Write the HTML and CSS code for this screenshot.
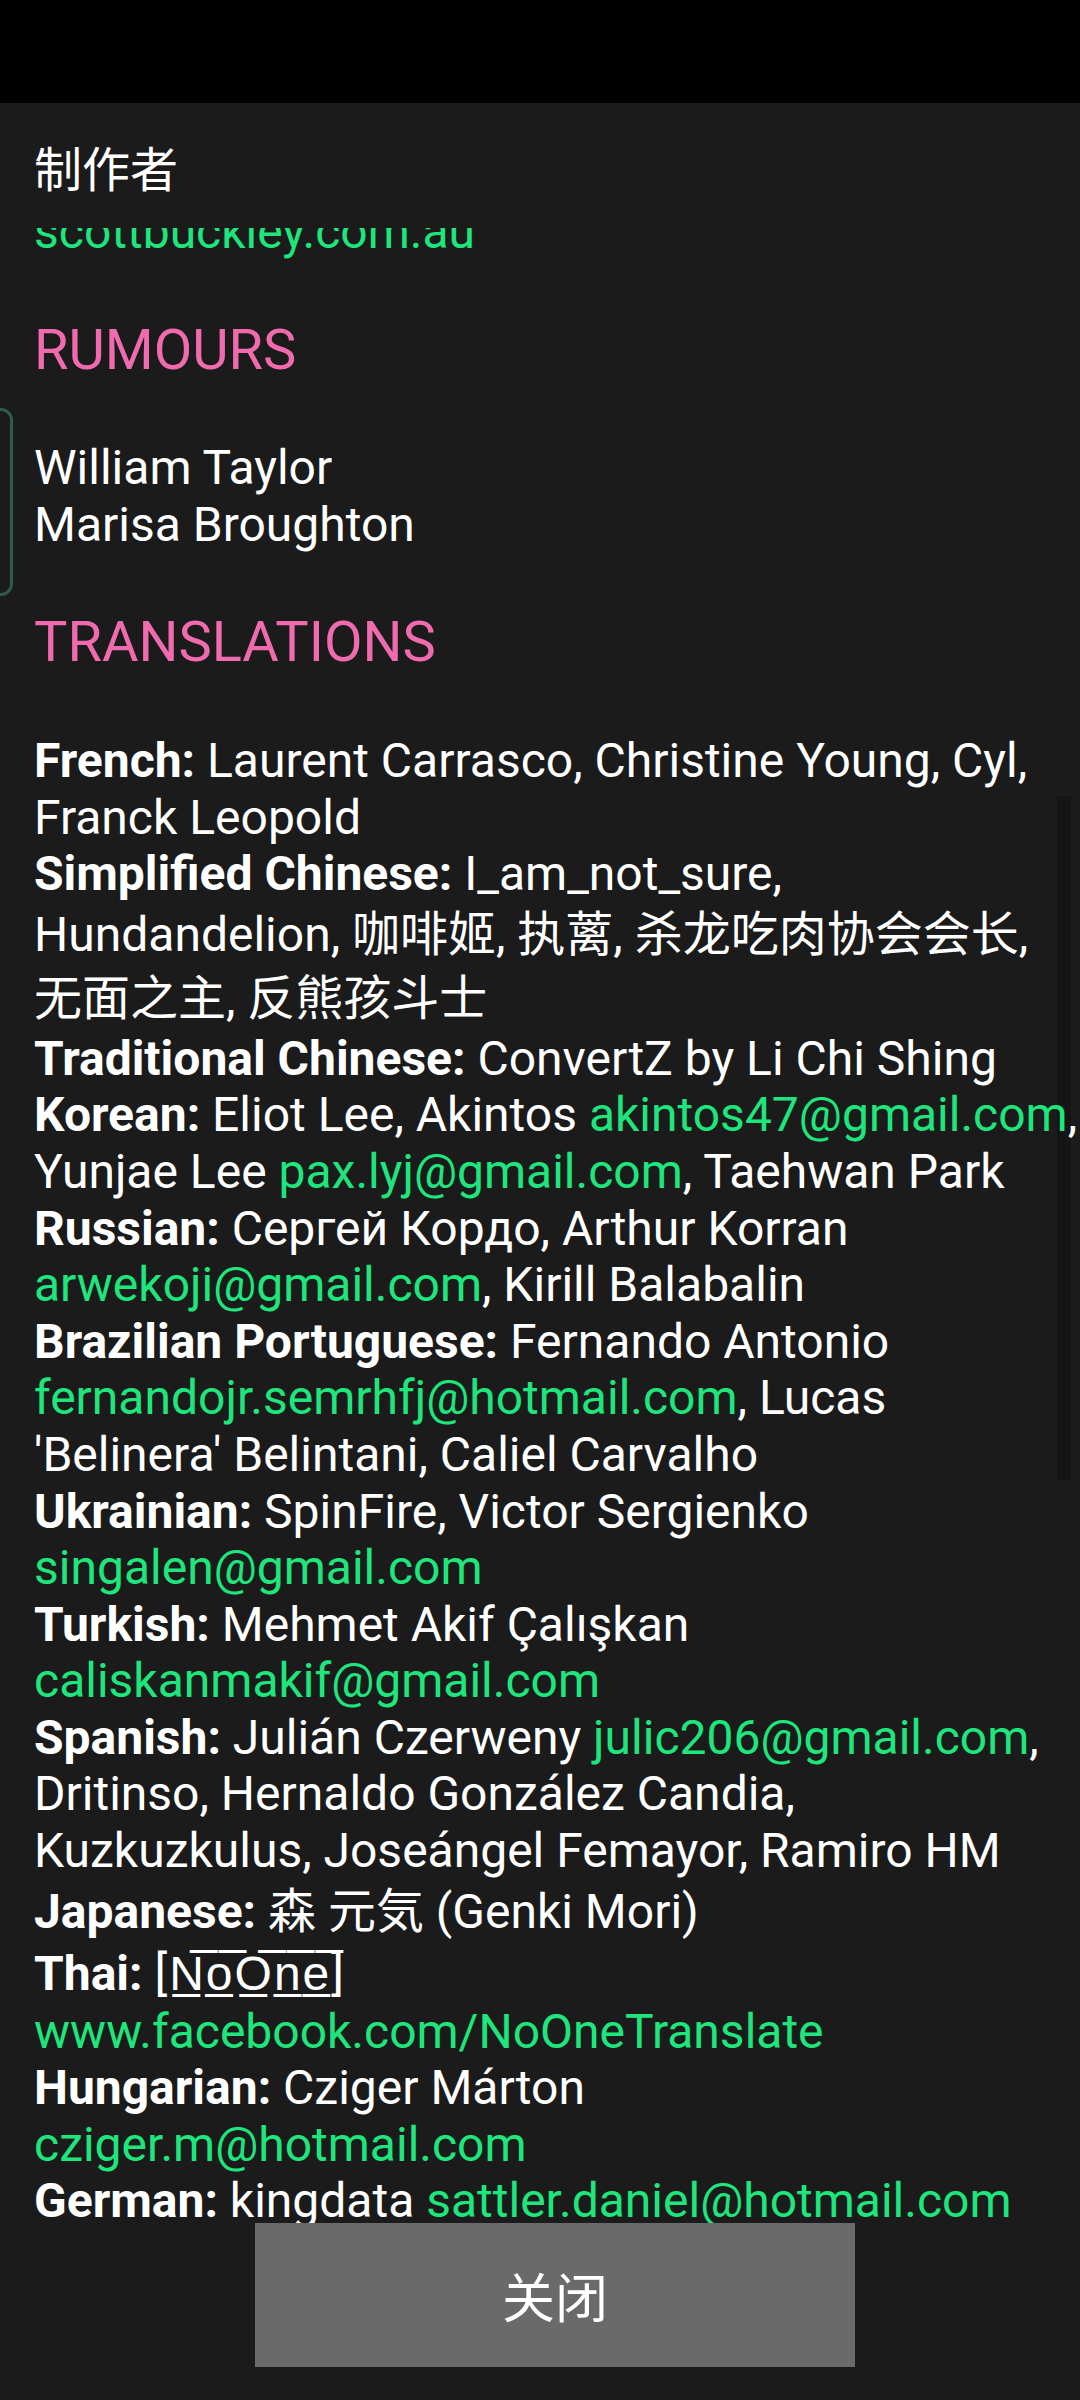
FILE: index.html
```html
<!DOCTYPE html>
<html lang="zh">
  <head>
    <meta charset="UTF-8" />
    <meta name="viewport" content="width=device-width, initial-scale=1.0" />
    <title>制作者</title>
    <link rel="stylesheet" href="styles.css">
  </head>
  <body>
    <div class="status-bar"></div>

    <div class="dialog">
      <h1 class="dialog-title">制作者</h1>

      <div class="scroll">
        <div class="scroll-content">
          <p class="link">scottbuckley.com.au</p>

          <h2>RUMOURS</h2>
          <p>William Taylor<br />Marisa Broughton</p>

          <h2>TRANSLATIONS</h2>
          <p>
            <b>French:</b> Laurent Carrasco, Christine Young, Cyl, Franck Leopold<br />
            <b>Simplified Chinese:</b> I_am_not_sure, Hundandelion, <span class="cjk">咖啡姬, 执蓠, 杀龙吃肉协会会长, 无面之主, 反熊孩斗士</span><br />
            <b>Traditional Chinese:</b> ConvertZ by Li Chi Shing<br />
            <b>Korean:</b> Eliot Lee, Akintos <span class="link">akintos47@gmail.com</span>, Yunjae Lee <span class="link">pax.lyj@gmail.com</span>, Taehwan Park<br />
            <b>Russian:</b> Сергей Кордо, Arthur Korran <span class="link">arwekoji@gmail.com</span>, Kirill Balabalin<br />
            <b>Brazilian Portuguese:</b> Fernando Antonio <span class="link">fernandojr.semrhfj@hotmail.com</span>, Lucas 'Belinera' Belintani, Caliel Carvalho<br />
            <b>Ukrainian:</b> SpinFire, Victor Sergienko <span class="link">singalen@gmail.com</span><br />
            <b>Turkish:</b> Mehmet Akif Çalışkan <span class="link">caliskanmakif@gmail.com</span><br />
            <b>Spanish:</b> Julián Czerweny <span class="link">julic206@gmail.com</span>, Dritinso, Hernaldo González Candia, Kuzkuzkulus, Joseángel Femayor, Ramiro HM<br />
            <b>Japanese:</b> <span class="cjk">森 元気</span> (Genki Mori)<br />
            <b>Thai:</b> <span class="marks">[N̲̅o̲̅O̲̅n̲̅e̲̅]</span> <span class="link">www.facebook.com/NoOneTranslate</span><br />
            <b>Hungarian:</b> Cziger Márton <span class="link">cziger.m@hotmail.com</span><br />
            <b>German:</b> kingdata <span class="link">sattler.daniel@hotmail.com</span>
          </p>
        </div>
        <div class="scroll-thumb"></div>
      </div>

      <div class="actions">
        <button type="button">关闭</button>
      </div>
    </div>

    <div class="edge-handle"></div>
  </body>
</html>
```

FILE: styles.css
```css
* {
  margin: 0;
  padding: 0;
  box-sizing: border-box;
}

body {
  width: 1080px;
  height: 2400px;
  display: flex;
  flex-direction: column;
  background-color: #1b1b1b;
  color: #ffffff;
  font-family: Roboto, "Noto Sans CJK SC", sans-serif;
  font-size: 48px;
  overflow: hidden;
  position: relative;
}

.status-bar {
  height: 103px;
  background-color: #000000;
}

.dialog {
  flex: 1;
  display: flex;
  flex-direction: column;
}

.dialog-title {
  height: 125px;
  padding: 36px 0 0 34px;
  font-size: 48px;
  font-weight: normal;
  line-height: 64px;
}

.scroll {
  position: relative;
  height: 1995px;
  overflow: hidden;
}

.scroll-content {
  margin-top: -24px;
  padding-left: 34px;
}

p {
  line-height: 56.6px;
}

h2 {
  margin: 57px 0;
  font-size: 56px;
  font-weight: normal;
  line-height: 65.6px;
  color: #f06bae;
}

b {
  font-weight: bold;
}

.link {
  color: #1ee67d;
}

.cjk {
  line-height: 64px;
}

.marks {
  line-height: 60px;
  letter-spacing: 2px;
}

.scroll-thumb {
  position: absolute;
  top: 568px;
  right: 9px;
  width: 14px;
  height: 684px;
  background-color: #151515;
  z-index: -1;
}

.actions {
  flex: 1;
  display: flex;
  justify-content: center;
  align-items: flex-start;
  padding-left: 30px;
}

button {
  width: 600px;
  height: 144px;
  border: none;
  background-color: #6a6a6a;
  color: #ffffff;
  font-family: Roboto, "Noto Sans CJK SC", sans-serif;
  font-size: 53px;
}

.edge-handle {
  position: absolute;
  top: 408px;
  left: -25px;
  width: 38px;
  height: 188px;
  border: 3px solid #2e5b4c;
  border-radius: 12px;
}
```
